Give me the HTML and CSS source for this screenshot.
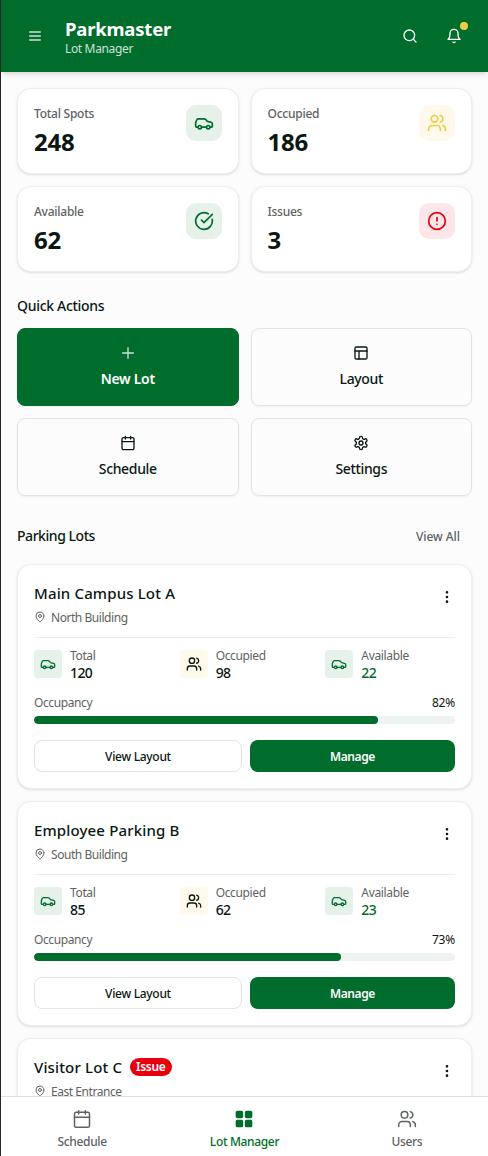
FILE: index.html
```
<!DOCTYPE html>
<html lang="en">
<head>
<meta charset="utf-8">
<title>Parkmaster - Lot Manager</title>
<link rel="stylesheet" href="styles.css">
</head>
<body>
<svg class="defs" aria-hidden="true">
  <symbol id="car" viewBox="0 0 24 24"><path d="M19 17h2c.6 0 1-.4 1-1v-3c0-.9-.7-1.7-1.5-1.9C18.7 10.6 16 10 16 10s-1.3-1.4-2.2-2.3c-.5-.4-1.1-.7-1.8-.7H5c-.6 0-1.1.4-1.4.9l-1.4 2.9A3.7 3.7 0 0 0 2 12v4c0 .6.4 1 1 1h2"/><circle cx="7" cy="17" r="2"/><path d="M9 17h6"/><circle cx="17" cy="17" r="2"/></symbol>
  <symbol id="users" viewBox="0 0 24 24"><path d="M16 21v-2a4 4 0 0 0-4-4H6a4 4 0 0 0-4 4v2"/><circle cx="9" cy="7" r="4"/><path d="M22 21v-2a4 4 0 0 0-3-3.87M16 3.13a4 4 0 0 1 0 7.75"/></symbol>
  <symbol id="check" viewBox="0 0 24 24"><path d="M21.801 10A10 10 0 1 1 17 3.335"/><path d="m9 11 3 3L22 4"/></symbol>
  <symbol id="alert" viewBox="0 0 24 24"><circle cx="12" cy="12" r="10"/><path d="M12 8v4M12 16h.01"/></symbol>
  <symbol id="calendar" viewBox="0 0 24 24"><path d="M8 2v4M16 2v4M3 10h18"/><rect x="3" y="4" width="18" height="18" rx="2"/></symbol>
  <symbol id="layout" viewBox="0 0 24 24"><rect x="3" y="3" width="18" height="18" rx="2"/><path d="M3 9h18M9 21V9"/></symbol>
  <symbol id="settings" viewBox="0 0 24 24"><path d="M12.22 2h-.44a2 2 0 0 0-2 2v.18a2 2 0 0 1-1 1.73l-.43.25a2 2 0 0 1-2 0l-.15-.08a2 2 0 0 0-2.73.73l-.22.38a2 2 0 0 0 .73 2.73l.15.1a2 2 0 0 1 1 1.72v.51a2 2 0 0 1-1 1.74l-.15.09a2 2 0 0 0-.73 2.73l.22.38a2 2 0 0 0 2.73.73l.15-.08a2 2 0 0 1 2 0l.43.25a2 2 0 0 1 1 1.73V20a2 2 0 0 0 2 2h.44a2 2 0 0 0 2-2v-.18a2 2 0 0 1 1-1.73l.43-.25a2 2 0 0 1 2 0l.15.08a2 2 0 0 0 2.73-.73l.22-.39a2 2 0 0 0-.73-2.73l-.15-.08a2 2 0 0 1-1-1.74v-.5a2 2 0 0 1 1-1.74l.15-.09a2 2 0 0 0 .73-2.73l-.22-.38a2 2 0 0 0-2.73-.73l-.15.08a2 2 0 0 1-2 0l-.43-.25a2 2 0 0 1-1-1.73V4a2 2 0 0 0-2-2z"/><circle cx="12" cy="12" r="3"/></symbol>
  <symbol id="pin" viewBox="0 0 24 24"><path d="M20 10c0 4.993-5.539 10.193-7.399 11.799a1 1 0 0 1-1.202 0C9.539 20.193 4 14.993 4 10a8 8 0 0 1 16 0"/><circle cx="12" cy="10" r="3"/></symbol>
  <symbol id="more" viewBox="0 0 24 24"><circle cx="12" cy="12" r="1"/><circle cx="12" cy="5" r="1"/><circle cx="12" cy="19" r="1"/></symbol>
</svg>
<div class="app">
  <header class="topbar">
    <button class="icon-button"><svg class="icon s16 soft" viewBox="0 0 24 24"><path d="M4 6h16M4 12h16M4 18h16"/></svg></button>
    <div class="brand"><h1>Parkmaster</h1><p>Lot Manager</p></div>
    <button class="icon-button"><svg class="icon s16" viewBox="0 0 24 24"><circle cx="11" cy="11" r="8"/><path d="m21 21-4.3-4.3"/></svg></button>
    <button class="icon-button bell"><svg class="icon s16" viewBox="0 0 24 24"><path d="M6 8a6 6 0 0 1 12 0c0 7 3 9 3 9H3s3-2 3-9"/><path d="M10.3 21a1.94 1.94 0 0 0 3.4 0"/></svg><span class="dot"></span></button>
  </header>
  <main>
    <section class="grid2">
      <div class="card summary"><div><p class="label">Total Spots</p><strong>248</strong></div><span class="tile green"><svg class="icon s20"><use href="#car"/></svg></span></div>
      <div class="card summary"><div><p class="label">Occupied</p><strong>186</strong></div><span class="tile yellow"><svg class="icon s20"><use href="#users"/></svg></span></div>
      <div class="card summary"><div><p class="label">Available</p><strong>62</strong></div><span class="tile green"><svg class="icon s20"><use href="#check"/></svg></span></div>
      <div class="card summary"><div><p class="label">Issues</p><strong>3</strong></div><span class="tile red"><svg class="icon s20"><use href="#alert"/></svg></span></div>
    </section>
    <h2 class="actions-title">Quick Actions</h2>
    <section class="grid2">
      <button class="action primary"><svg class="icon s16 soft" viewBox="0 0 24 24"><path d="M4 12h16M12 4v16"/></svg>New Lot</button>
      <button class="action"><svg class="icon s16"><use href="#layout"/></svg>Layout</button>
      <button class="action"><svg class="icon s16"><use href="#calendar"/></svg>Schedule</button>
      <button class="action"><svg class="icon s16"><use href="#settings"/></svg>Settings</button>
    </section>
    <div class="lots-head"><h2>Parking Lots</h2><a>View All</a></div>
    <section class="lots">
      <article class="card lot">
        <div class="lot-head"><div><h3>Main Campus Lot A</h3><p class="place"><svg class="icon s12"><use href="#pin"/></svg>North Building</p></div><button class="more"><svg class="icon s16"><use href="#more"/></svg></button></div>
        <div class="stats">
          <div class="stat"><span class="tile small green"><svg class="icon s16"><use href="#car"/></svg></span><div><p>Total</p><b>120</b></div></div>
          <div class="stat"><span class="tile small yellow ink"><svg class="icon s16"><use href="#users"/></svg></span><div><p>Occupied</p><b>98</b></div></div>
          <div class="stat"><span class="tile small green"><svg class="icon s16"><use href="#car"/></svg></span><div><p>Available</p><b class="free">22</b></div></div>
        </div>
        <div class="occupancy"><span>Occupancy</span><em>82%</em></div>
        <div class="track"><div class="fill" style="width:81.7%"></div></div>
        <div class="buttons"><button class="outline">View Layout</button><button class="solid">Manage</button></div>
      </article>
      <article class="card lot">
        <div class="lot-head"><div><h3>Employee Parking B</h3><p class="place"><svg class="icon s12"><use href="#pin"/></svg>South Building</p></div><button class="more"><svg class="icon s16"><use href="#more"/></svg></button></div>
        <div class="stats">
          <div class="stat"><span class="tile small green"><svg class="icon s16"><use href="#car"/></svg></span><div><p>Total</p><b>85</b></div></div>
          <div class="stat"><span class="tile small yellow ink"><svg class="icon s16"><use href="#users"/></svg></span><div><p>Occupied</p><b>62</b></div></div>
          <div class="stat"><span class="tile small green"><svg class="icon s16"><use href="#car"/></svg></span><div><p>Available</p><b class="free">23</b></div></div>
        </div>
        <div class="occupancy"><span>Occupancy</span><em>73%</em></div>
        <div class="track"><div class="fill" style="width:73%"></div></div>
        <div class="buttons"><button class="outline">View Layout</button><button class="solid">Manage</button></div>
      </article>
      <article class="card lot">
        <div class="lot-head"><div><h3>Visitor Lot C<span class="badge">Issue</span></h3><p class="place"><svg class="icon s12"><use href="#pin"/></svg>East Entrance</p></div><button class="more"><svg class="icon s16"><use href="#more"/></svg></button></div>
      </article>
    </section>
  </main>
  <nav class="tabs">
    <a><svg class="icon s20 thin"><use href="#calendar"/></svg>Schedule</a>
    <a class="current"><svg class="icon s20 filled" viewBox="0 0 24 24"><rect x="3" y="3" width="7" height="7" rx="1"/><rect x="14" y="3" width="7" height="7" rx="1"/><rect x="14" y="14" width="7" height="7" rx="1"/><rect x="3" y="14" width="7" height="7" rx="1"/></svg>Lot Manager</a>
    <a><svg class="icon s20 thin"><use href="#users"/></svg>Users</a>
  </nav>
</div>
</body>
</html>
```
FILE: styles.css
```
* { box-sizing: border-box; }
body, h1, h2, h3, p { margin: 0; }
body { font-family: "Noto Sans", "Open Sans", sans-serif; color: #0b1712; background: #fcfcfc; }
button { font: inherit; color: inherit; background: none; border: 0; padding: 0; }
.defs { position: absolute; width: 0; height: 0; }
.app { height: 1156px; display: flex; flex-direction: column; border-left: 1px solid #252525; overflow: hidden; }
.icon { display: block; flex: none; fill: none; stroke: currentColor; stroke-width: 2; stroke-linecap: round; stroke-linejoin: round; }
.s12 { width: 12px; height: 12px; }
.s16 { width: 16px; height: 16px; }
.s20 { width: 20px; height: 20px; }
.soft { opacity: .8; }

.topbar { height: 72px; flex: none; display: flex; align-items: center; gap: 8px; padding: 0 16px; background: #006d2c; color: #fff; box-shadow: 0 4px 6px -1px rgb(0 0 0 / .1), 0 2px 4px -2px rgb(0 0 0 / .1); z-index: 1; }
.icon-button { width: 36px; height: 36px; display: grid; place-items: center; }
.brand { flex: 1; margin-left: 4px; padding-top: 2px; }
.brand h1 { font-size: 18.5px; line-height: 22px; font-weight: 700; letter-spacing: -.2px; }
.brand p { font-size: 12px; line-height: 16px; padding-top: 1px; letter-spacing: -.35px; opacity: .8; }
.bell { position: relative; }
.dot { position: absolute; top: 4px; right: 4px; width: 8px; height: 8px; border-radius: 50%; background: #f0cc45; }

main { flex: 1; min-height: 0; overflow: hidden; padding: 16px 16px 0; }
.grid2 { display: grid; grid-template-columns: 1fr 1fr; gap: 12px; }
.card { background: #fff; border: 1px solid #efefef; border-radius: 14px; box-shadow: 0 1px 3px rgb(0 0 0 / .1), 0 1px 2px -1px rgb(0 0 0 / .1); padding: 16px; }
.summary { height: 86px; display: flex; justify-content: space-between; }
.label { font-size: 12px; line-height: 16px; padding-top: 1px; letter-spacing: -.25px; color: #5d6360; font-weight: 500; }
.summary strong { display: block; margin-top: 4px; font-size: 24px; line-height: 32px; font-weight: 700; letter-spacing: -.2px; }
.tile { width: 36px; height: 36px; flex: none; display: grid; place-items: center; border-radius: 10px; }
.tile.small { width: 28px; height: 28px; border-radius: 4px; }
.green { color: #006d2c; background: #e6f1ea; }
.yellow { color: #f0cc45; background: #fef9ea; }
.yellow.ink { color: #0b1712; }
.red { color: #e7000b; background: #fde6e7; }
h2 { font-size: 14px; line-height: 20px; font-weight: 500; letter-spacing: -.35px; }
.actions-title { margin: 24px 0 12px; letter-spacing: -.3px; }
.action { height: 78px; display: flex; flex-direction: column; align-items: center; padding-top: 16px; gap: 8px; border: 1px solid #e1e4e3; border-radius: 8px; box-shadow: 0 1px 2px rgb(0 0 0 / .05); font-size: 14px; line-height: 20px; font-weight: 500; letter-spacing: -.35px; }
.primary { background: #006d2c; border-color: #006d2c; color: #fff; font-weight: 600; letter-spacing: -.3px; }
.lots-head { display: flex; align-items: center; justify-content: space-between; height: 32px; margin: 24px 0 12px; padding-right: 12px; }
.lots-head h2 { letter-spacing: -.45px; }
.lots-head a { font-size: 12px; font-weight: 500; letter-spacing: -.05px; color: #5d6360; }
.lots { display: flex; flex-direction: column; gap: 12px; }
.lot { height: 225px; flex: none; }
.lot-head { height: 57px; display: flex; justify-content: space-between; border-bottom: 1px solid #eeefef; }
h3 { display: flex; align-items: center; font-size: 15px; line-height: 24px; font-weight: 500; letter-spacing: .15px; }
.place { display: flex; align-items: center; gap: 5px; font-size: 12px; line-height: 16px; margin-top: 5px; color: #5d6360; letter-spacing: -.45px; }
.place .icon { margin-bottom: 2px; }
.more { width: 16px; height: 32px; display: grid; place-items: center; }
.stats { display: grid; grid-template-columns: repeat(3, 1fr); gap: 16px; margin-top: 8px; }
.stat { display: flex; align-items: center; gap: 8px; height: 36px; }
.stat p { font-size: 12px; line-height: 16px; padding-top: 1px; color: #5d6360; letter-spacing: -.35px; }
.stat b { display: block; font-size: 14px; line-height: 18px; font-weight: 500; letter-spacing: -.6px; }
.stat .free { color: #006d2c; }
.occupancy { display: flex; justify-content: space-between; margin-top: 12px; font-size: 12px; line-height: 18px; color: #5d6360; letter-spacing: -.4px; }
.occupancy em { font-style: normal; color: #0b1712; letter-spacing: -.2px; }
.track { margin-top: 4px; height: 8px; border-radius: 4px; background: #eef2f0; overflow: hidden; }
.fill { height: 100%; border-radius: 4px; background: #006d2c; }
.buttons { display: grid; grid-template-columns: 208px 1fr; gap: 8px; margin-top: 16px; height: 32px; font-size: 12px; font-weight: 500; }
.buttons button { letter-spacing: -.3px; }
.outline { border: 1px solid #e1e4e3; border-radius: 8px; }
.buttons .solid { border-radius: 8px; background: #006d2c; color: #fff; font-weight: 600; letter-spacing: -.4px; }
.badge { margin-left: 8px; padding: 0 6px; border-radius: 9px; background: #e7000b; color: #fff; font-size: 12px; line-height: 18px; font-weight: 600; letter-spacing: -.3px; }

.tabs { height: 60px; flex: none; display: grid; grid-template-columns: repeat(3, 1fr); border-top: 1px solid #dfe2e1; background: #fff; color: #5d6360; }
.tabs a { display: flex; flex-direction: column; align-items: center; padding-top: 12px; gap: 5px; font-size: 12px; line-height: 16px; font-weight: 500; letter-spacing: -.35px; }
.tabs .current { color: #006d2c; }
.thin { stroke-width: 1.8; }
.filled { fill: currentColor; }
```
